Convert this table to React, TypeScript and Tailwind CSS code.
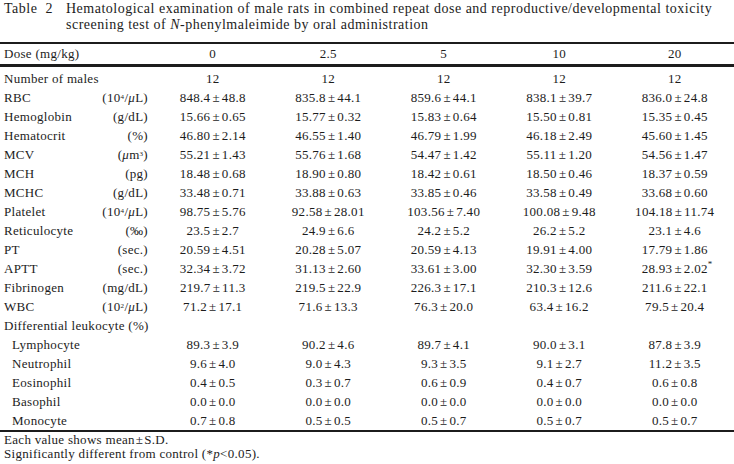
import type { ReactNode } from "react"

type Row = {
  label: string
  unit?: ReactNode
  values: string[]
  indent?: boolean
}

const perMicroL = (exp: string) => (
  <>
    (10<sup className="text-[7px]">{exp}</sup>/<i>μ</i>L)
  </>
)

const rows: Row[] = [
  { label: "Number of males", values: ["12", "12", "12", "12", "12"] },
  { label: "RBC", unit: perMicroL("4"), values: ["848.4±48.8", "835.8±44.1", "859.6±44.1", "838.1±39.7", "836.0±24.8"] },
  { label: "Hemoglobin", unit: "(g/dL)", values: ["15.66±0.65", "15.77±0.32", "15.83±0.64", "15.50±0.81", "15.35±0.45"] },
  { label: "Hematocrit", unit: "(%)", values: ["46.80±2.14", "46.55±1.40", "46.79±1.99", "46.18±2.49", "45.60±1.45"] },
  {
    label: "MCV",
    unit: (
      <>
        (<i>μ</i>m<sup className="text-[7px]">3</sup>)
      </>
    ),
    values: ["55.21±1.43", "55.76±1.68", "54.47±1.42", "55.11±1.20", "54.56±1.47"],
  },
  { label: "MCH", unit: "(pg)", values: ["18.48±0.68", "18.90±0.80", "18.42±0.61", "18.50±0.46", "18.37±0.59"] },
  { label: "MCHC", unit: "(g/dL)", values: ["33.48±0.71", "33.88±0.63", "33.85±0.46", "33.58±0.49", "33.68±0.60"] },
  { label: "Platelet", unit: perMicroL("4"), values: ["98.75±5.76", "92.58±28.01", "103.56±7.40", "100.08±9.48", "104.18±11.74"] },
  { label: "Reticulocyte", unit: "(‰)", values: ["23.5±2.7", "24.9±6.6", "24.2±5.2", "26.2±5.2", "23.1±4.6"] },
  { label: "PT", unit: "(sec.)", values: ["20.59±4.51", "20.28±5.07", "20.59±4.13", "19.91±4.00", "17.79±1.86"] },
  { label: "APTT", unit: "(sec.)", values: ["32.34±3.72", "31.13±2.60", "33.61±3.00", "32.30±3.59", "28.93±2.02*"] },
  { label: "Fibrinogen", unit: "(mg/dL)", values: ["219.7±11.3", "219.5±22.9", "226.3±17.1", "210.3±12.6", "211.6±22.1"] },
  { label: "WBC", unit: perMicroL("2"), values: ["71.2±17.1", "71.6±13.3", "76.3±20.0", "63.4±16.2", "79.5±20.4"] },
  { label: "Differential leukocyte", values: [] },
  { label: "Lymphocyte", indent: true, values: ["89.3±3.9", "90.2±4.6", "89.7±4.1", "90.0±3.1", "87.8±3.9"] },
  { label: "Neutrophil", indent: true, values: ["9.6±4.0", "9.0±4.3", "9.3±3.5", "9.1±2.7", "11.2±3.5"] },
  { label: "Eosinophil", indent: true, values: ["0.4±0.5", "0.3±0.7", "0.6±0.9", "0.4±0.7", "0.6±0.8"] },
  { label: "Basophil", indent: true, values: ["0.0±0.0", "0.0±0.0", "0.0±0.0", "0.0±0.0", "0.0±0.0"] },
  { label: "Monocyte", indent: true, values: ["0.7±0.8", "0.5±0.5", "0.5±0.7", "0.5±0.7", "0.5±0.7"] },
]

const doses = ["0", "2.5", "5", "10", "20"]

// mean ± SD, the plus-minus sign set a little apart like the printed table
function Value({ v }: { v: string }) {
  const star = v.endsWith("*")
  const [mean, sd] = (star ? v.slice(0, -1) : v).split("±")
  if (!sd) return <span>{mean}</span>
  return (
    <span className="relative">
      {mean}
      <span className="mx-[2px]">±</span>
      {sd}
      {star && <span className="absolute left-full top-[-3px] text-[9px]">*</span>}
    </span>
  )
}

export default function App() {
  return (
    <div className="w-[734px] h-[464px] bg-white text-[#1c1c1c] font-['Liberation_Serif',serif] overflow-hidden">
      {/* Caption */}
      <div className="flex pt-[1px] pl-[4px] text-[14px] leading-[16px] h-[42px] tracking-[0.5px]">
        <div className="w-[62px] shrink-0">Table&nbsp;&nbsp;2</div>
        <div className="whitespace-nowrap">
          Hematological examination of male rats in combined repeat dose and reproductive/developmental toxicity
          <br />
          screening test of <i>N</i>-phenylmaleimide by oral administration
        </div>
      </div>

      {/* Table */}
      <div className="font-['Liberation_Serif',serif] text-[13px] tracking-[0.3px]">
        <div className="grid grid-cols-[155px_repeat(5,115.5px)] h-[25px] items-center border-t-2 border-b-[3px] border-[#1c1c1c]">
          <div className="pl-[4px]">Dose (mg/kg)</div>
          {doses.map((d) => (
            <div key={d} className="text-center">
              {d}
            </div>
          ))}
        </div>

        <div className="pt-[2px]">
          {rows.map((r) => (
            <div key={r.label} className="grid grid-cols-[155px_repeat(5,115.5px)] h-[19px] items-center">
              {r.label === "Differential leukocyte" ? (
                <div className="pl-[4px] whitespace-nowrap">Differential leukocyte&nbsp;(%)</div>
              ) : (
                <div className={`flex justify-between pr-[7px] ${r.indent ? "pl-[12px]" : "pl-[4px]"}`}>
                  <span>{r.label}</span>
                  {r.unit && <span>{r.unit}</span>}
                </div>
              )}
              {r.values.map((v, i) => (
                <div key={i} className="text-center">
                  <Value v={v} />
                </div>
              ))}
            </div>
          ))}
        </div>

        <div className="border-t-2 border-[#1c1c1c] pt-[1px] pl-[4px] leading-[14px]">
          <div>
            Each value shows mean<span className="mx-[1px]">±</span>S.D.
          </div>
          <div>
            Significantly different from control (*<i>p</i>&lt;0.05).
          </div>
        </div>
      </div>
    </div>
  )
}
